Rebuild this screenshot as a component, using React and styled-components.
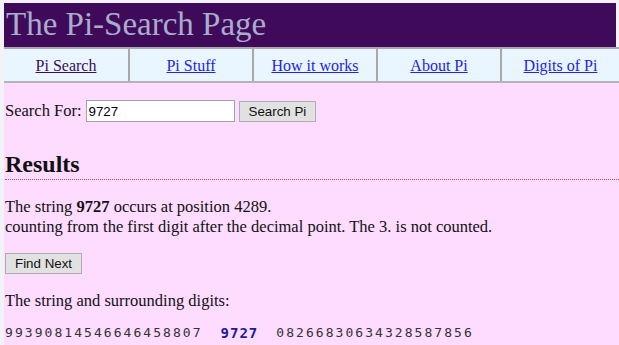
import styled, { createGlobalStyle } from 'styled-components';

const GlobalStyle = createGlobalStyle`
    html, body {
        margin: 0;
        padding: 0;
        background: #f3f2f6;
    }
    body {
        padding: 3px 0 0 4px;
        font-family: "Liberation Serif", "Times New Roman", serif;
        font-size: 16.5px;
        color: #111;
    }
`

const navItems = [
    { label: 'Pi Search', visited: true },
    { label: 'Pi Stuff' },
    { label: 'How it works' },
    { label: 'About Pi' },
    { label: 'Digits of Pi' },
];

const App = () => {
    return <Page>
        <GlobalStyle/>
        <Header>The Pi-Search Page</Header>
        <Nav>
            {navItems.map(item => (
                <NavCell key={item.label}>
                    <NavLink href="#" $visited={item.visited}>{item.label}</NavLink>
                </NavCell>
            ))}
        </Nav>
        <Main>
            <SearchRow>
                <label>Search For:</label>
                <SearchInput defaultValue="9727"/>
                <Button>Search Pi</Button>
            </SearchRow>
            <ResultsTitle>Results</ResultsTitle>
            <Text>
                The string <b>9727</b> occurs at position 4289.<br/>
                counting from the first digit after the decimal point. The 3. is not counted.
            </Text>
            <NextRow>
                <Button>Find Next</Button>
            </NextRow>
            <Text>The string and surrounding digits:</Text>
            <Digits>
                <span>99390814546646458807</span>
                <Match>9727</Match>
                <span>08266830634328587856</span>
            </Digits>
        </Main>
    </Page>
}

export default App;

const Page = styled.div`
    display: flex;
    flex-direction: column;
    min-height: 342px;
`

const Header = styled.h1`
    margin: 0;
    height: 44px;
    padding: 0 0 0 2px;
    background: #400a5a;
    color: #a7adcb;
    font-family: "Liberation Serif", "Times New Roman", serif;
    font-weight: normal;
    font-size: 33px;
    line-height: 42px;
    width: 610px;
`

const Nav = styled.div`
    display: grid;
    grid-template-columns: 124px 124px 124px 124px 1fr;
    background: #e9f6ff;
    border-top: 2px solid #a9a9a9;
    border-bottom: 2px solid #b4b4b4;
`

const NavCell = styled.div`
    display: flex;
    align-items: center;
    justify-content: center;
    height: 32px;
    border-left: 2px solid #a9a9a9;

    &:first-child {
        border-left: none;
    }
`

const NavLink = styled.a`
    color: ${props => props.$visited ? '#3c0c5c' : '#2323e8'};
    text-decoration: underline;
    font-size: 16px;
    padding-top: 2px;
`

const Main = styled.div`
    flex: 1;
    background: #fddcff;
    padding: 16px 0 4px 1px;
`

const SearchRow = styled.div`
    display: flex;
    align-items: center;
    gap: 4px;
    height: 24px;
`

const SearchInput = styled.input`
    width: 143px;
    height: 18px;
    padding: 1px 2px;
    border: 1px solid #a4a0a6;
    font-family: "Liberation Sans", Arial, sans-serif;
    font-size: 13.33px;
    color: #000;
    background: #fff;
    outline: none;
`

const Button = styled.button`
    height: 21px;
    padding: 0 9px;
    background: #e1e1e1;
    border: 1px solid #adadad;
    border-radius: 0;
    font-family: "Liberation Sans", Arial, sans-serif;
    font-size: 13.33px;
    color: #111;
`

const ResultsTitle = styled.h2`
    margin: 27px 0 0;
    font-size: 24px;
    line-height: 29px;
    font-weight: bold;
    border-bottom: 1px dotted #e0405a;
`

const Text = styled.p`
    margin: 17px 0 0;
    line-height: 20px;
`

const NextRow = styled.div`
    margin-top: 16px;
    display: flex;
`

const Digits = styled.div`
    margin-top: 14px;
    display: flex;
    gap: 18px;
    font-family: "DejaVu Sans Mono", "Liberation Mono", monospace;
    font-size: 13px;
    letter-spacing: 2.05px;
    color: #333;
`

const Match = styled.b`
    color: #1b1b9e;
    font-size: 14px;
    letter-spacing: 1px;
`
